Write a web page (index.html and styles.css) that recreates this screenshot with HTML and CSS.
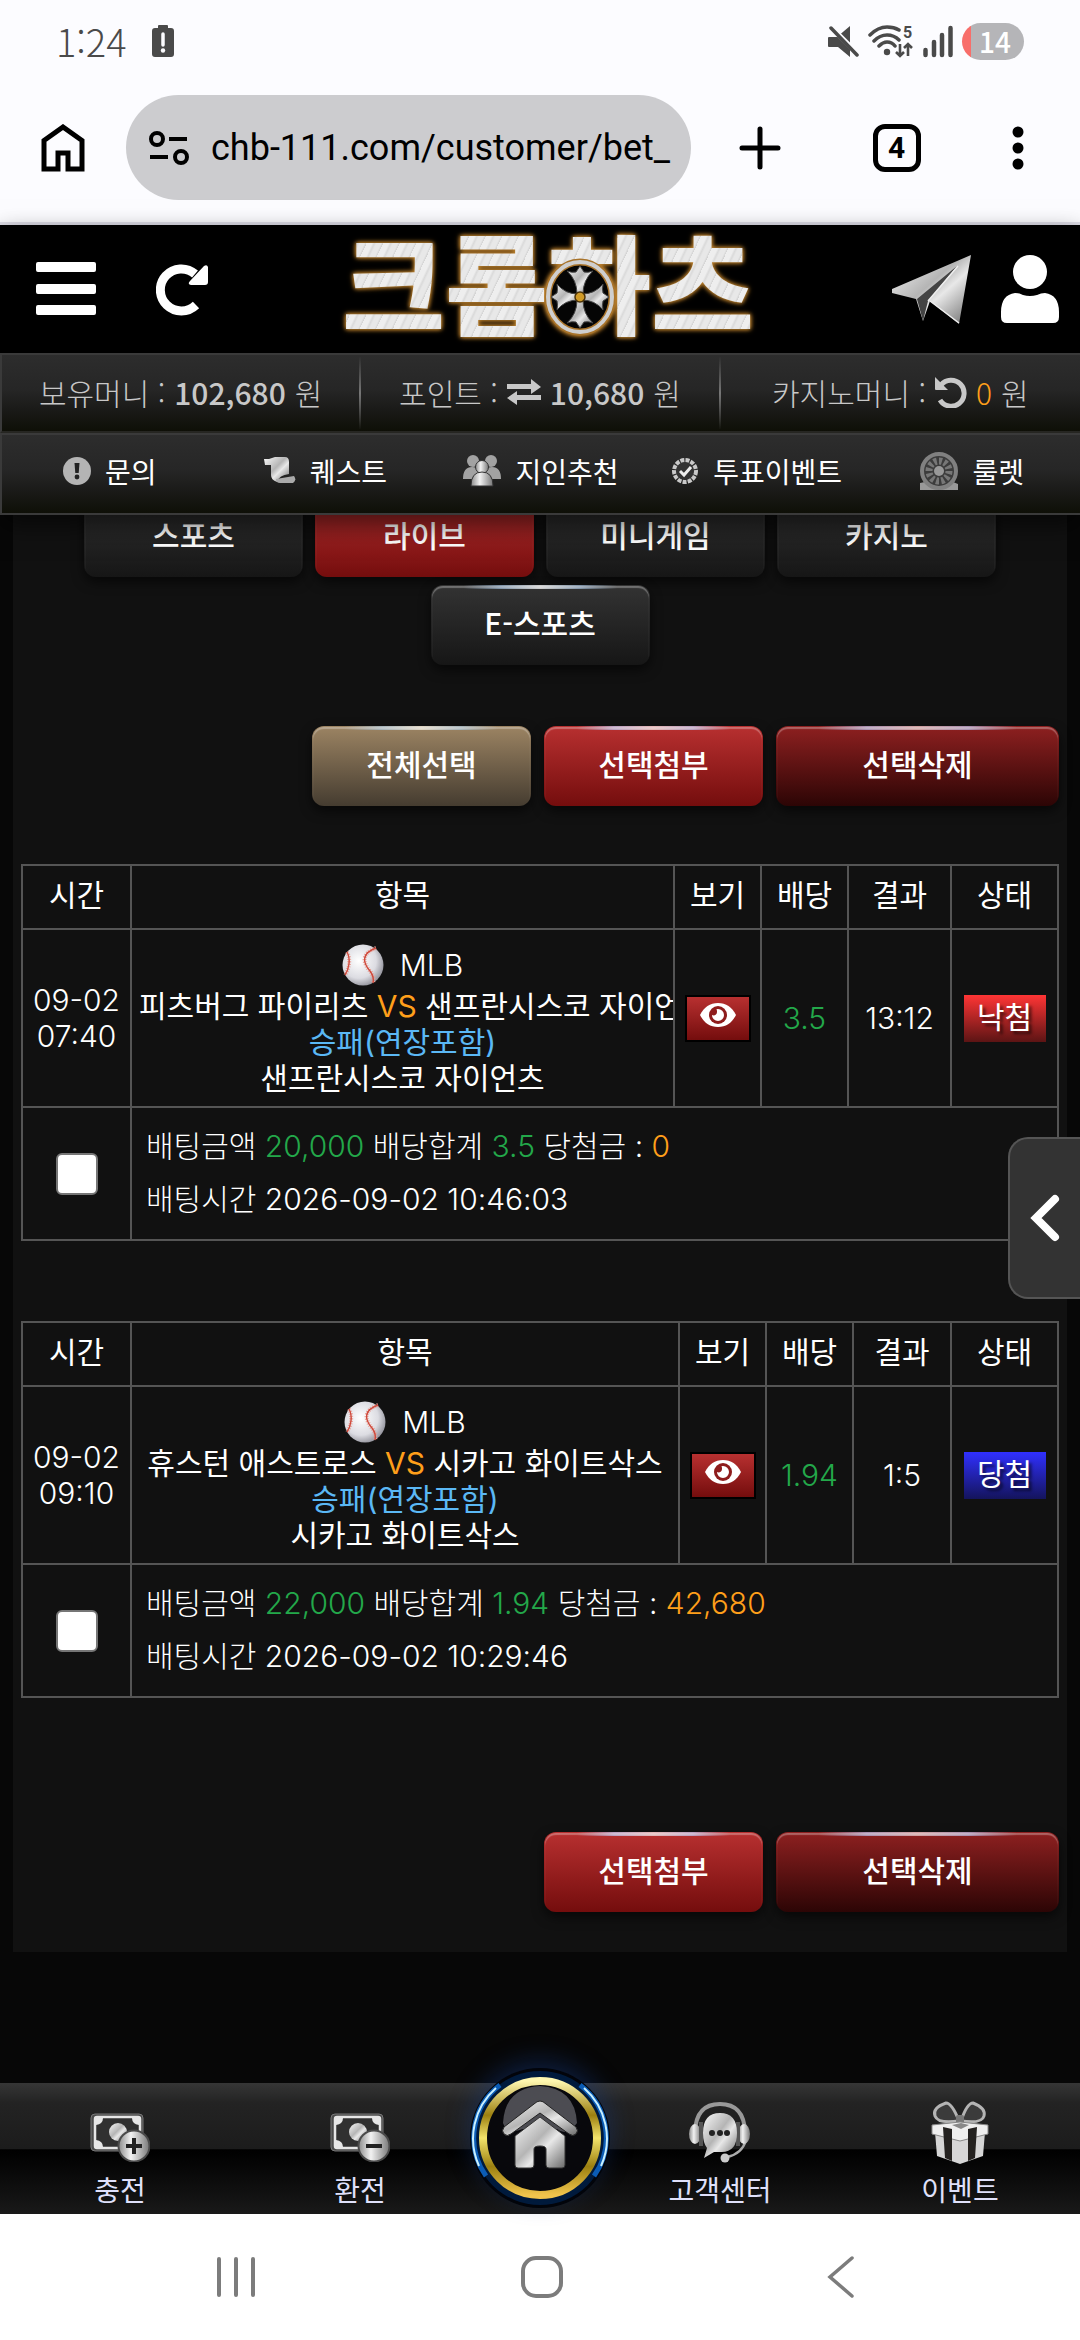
FILE: index.html
```html
<!DOCTYPE html>
<html lang="ko">
<head>
    <meta charset="UTF-8">
    <meta name="viewport" content="width=device-width, initial-scale=1.0">
    <title>크롬하츠</title>
    <link rel="stylesheet" href="styles.css">
</head>
<body>
    <!-- 공용 아이콘 -->
    <svg class="defs" width="0" height="0" aria-hidden="true">
        <defs>
            <linearGradient id="silver" x1="0" y1="0" x2="1" y2="1">
                <stop offset="0" stop-color="#fafafa"/><stop offset=".45" stop-color="#b5b5b5"/><stop offset=".6" stop-color="#e8e8e8"/><stop offset="1" stop-color="#6a6a6a"/>
            </linearGradient>
            <linearGradient id="grey" x1="0" y1="0" x2="1" y2="0">
                <stop offset="0" stop-color="#8a8a8a"/><stop offset=".4" stop-color="#f2f2f2"/><stop offset="1" stop-color="#777"/>
            </linearGradient>
            <linearGradient id="gold" x1="0" y1="0" x2="0" y2="1">
                <stop offset="0" stop-color="#fff8b0"/><stop offset=".3" stop-color="#9c8010"/><stop offset=".5" stop-color="#f3e36b"/><stop offset=".75" stop-color="#9c8010"/><stop offset="1" stop-color="#f0c44c"/>
            </linearGradient>
            <radialGradient id="ballShade" cx=".4" cy=".4" r=".65">
                <stop offset="0" stop-color="#fff"/><stop offset=".65" stop-color="#dcdce2"/><stop offset="1" stop-color="#8f8f98"/>
            </radialGradient>
        </defs>
        <symbol id="baseball" viewBox="0 0 42 42">
            <circle cx="21" cy="21" r="20.5" fill="url(#ballShade)"/>
            <path d="M5 8c4 7 2 17-2 23M34 4c-14 5-14 14-6 23 3 4 4 8 3 12" fill="none" stroke="#e8a097" stroke-width="4" stroke-dasharray="1 1.4"/>
            <path d="M5 8c4 7 2 17-2 23M34 4c-14 5-14 14-6 23 3 4 4 8 3 12" fill="none" stroke="#cf4a3c" stroke-width="1.4"/>
        </symbol>
        <symbol id="eye" viewBox="0 0 36 24">
            <path d="M0 12C4 4 10 0 18 0s14 4 18 12c-4 8-10 12-18 12S4 20 0 12z" fill="#fff"/>
            <circle cx="18" cy="12" r="9" fill="#8e1c1c"/>
            <path d="M18 6a6 6 0 1 1-6 6c2 1 5 0 5-3 0-1 0-2-.6-2.800Q17 6 18 6z" fill="#fff"/>
        </symbol>
        <symbol id="money" viewBox="0 0 60 50">
            <rect x="1" y="2" width="52" height="37" rx="4" fill="#4a4a4a" stroke="#777"/>
            <rect x="5" y="5" width="45" height="31" rx="2" fill="#303030" stroke="#e6e6e6" stroke-width="2.500"/>
            <path d="M6 6h7q0 6-7 7zM49 6h-7q0 6 7 7zM6 35h7q0-6-7-7z" fill="#e6e6e6"/>
            <circle cx="28" cy="20" r="9" fill="url(#silver)"/>
            <circle cx="44" cy="34" r="15.500" fill="url(#grey)" stroke="#4a4a4a" stroke-width="2"/>
        </symbol>
    </svg>

    <div class="status-bar">
        <div class="status-left">
            <span class="clock">1:24</span>
            <svg width="24" height="34" viewBox="0 0 24 34"><path d="M8 1h8q1 0 1 1v2h3q3 0 3 3v23q0 3-3 3H4q-3 0-3-3V7q0-3 3-3h3V2q0-1 1-1z" fill="#4a4a4a"/><path d="M12 10v11" stroke="#fcfcff" stroke-width="3.500" stroke-linecap="round"/><circle cx="12" cy="26.500" r="2.200" fill="#fcfcff"/></svg>
        </div>
        <div class="status-right">
            <svg width="32" height="34" viewBox="0 0 32 34"><path d="M2 13h8l13-11v31L11 23H2q-1 0-1-1v-8q0-1 1-1z" fill="#4a4a4a"/><path d="M1 0l31 31" stroke="#fcfcff" stroke-width="5"/><path d="M4 4l26 27" stroke="#4a4a4a" stroke-width="3.500" stroke-linecap="round"/></svg>
            <svg width="46" height="34" viewBox="0 0 46 34">
                <path d="M2 11q8-8 17-8 7 0 12 3M6 17q6-6 13-6 7 0 12 5M11 22q4-4 8-4 5 0 8 4" fill="none" stroke="#4a4a4a" stroke-width="3.500" stroke-linecap="round"/><circle cx="19" cy="28" r="3.200" fill="#4a4a4a"/>
                <path d="M32 20v12M28 28l4 4 4-4M40 32V20M36 24l4-4 4 4" fill="none" stroke="#4a4a4a" stroke-width="2.600"/>
                <text class="wifi-num" x="35" y="14">5</text>
            </svg>
            <svg width="30" height="34" viewBox="0 0 30 34"><path d="M2.500 26v5M11 18v13M19 11v20M27.500 4v27" stroke="#4a4a4a" stroke-width="4.500" stroke-linecap="round"/></svg>
            <span class="battery">14</span>
        </div>
    </div>

    <div class="browser-bar">
        <button class="plain" aria-label="홈"><svg width="44" height="48" viewBox="0 0 44 48"><path d="M3 16.500L22 3l19 13.500V45H27V29H17v16H3z" fill="none" stroke="#000" stroke-width="5"/></svg></button>
        <label class="url-box">
            <svg width="40" height="34" viewBox="0 0 40 34"><g fill="none" stroke="#000" stroke-width="4"><circle cx="8" cy="8" r="6"/><path d="M20 8h18M1 26h18"/><circle cx="32" cy="26" r="6"/></g></svg>
            <input type="text" value="chb-111.com/customer/bet_" aria-label="주소">
        </label>
        <div class="browser-actions">
            <button class="plain" aria-label="새 탭"><svg width="42" height="44" viewBox="0 0 42 44"><path d="M21 3v38M3 22h36" stroke="#000" stroke-width="5" stroke-linecap="round"/></svg></button>
            <button class="tab-count">4</button>
            <button class="plain" aria-label="메뉴"><svg width="12" height="44" viewBox="0 0 12 44"><circle cx="6" cy="6" r="5.500"/><circle cx="6" cy="22" r="5.500"/><circle cx="6" cy="38" r="5.500"/></svg></button>
        </div>
    </div>

    <header class="header">
        <div class="top">
            <div class="top-left">
                <button class="plain" aria-label="전체메뉴"><svg width="60" height="54" viewBox="0 0 60 54"><path d="M0 2q0-2 2-2h56q2 0 2 2v6q0 2-2 2H2q-2 0-2-2zM0 24q0-2 2-2h56q2 0 2 2v6q0 2-2 2H2q-2 0-2-2zM0 45q0-2 2-2h56q2 0 2 2v6q0 2-2 2H2q-2 0-2-2z" fill="#fff"/></svg></button>
                <button class="plain" aria-label="새로고침"><svg width="54" height="54" viewBox="0 0 54 54"><path d="M40 43A21 21 0 1 1 39 12" fill="none" stroke="#fff" stroke-width="9"/><path d="M52 5v15q0 3-3 3H35q-4-1-1-4L48 4q3-2 4 1z" fill="#fff"/></svg></button>
            </div>
            <h1 class="logo">
                <a href="#">크롬하츠</a>
                <svg class="logo-cross" width="72" height="78" viewBox="0 0 72 78">
                    <ellipse cx="36" cy="39" rx="32" ry="35" fill="#050505" stroke="#a8732a" stroke-width="7"/>
                    <ellipse cx="36" cy="39" rx="32" ry="35" fill="none" stroke="#cfcfcf" stroke-width="4"/>
                    <g fill="url(#silver)" stroke="#444" stroke-width="1">
                        <path d="M33 36q0-14-10-23 5 2 9 1l4-6 4 6q4 1 9-1-10 9-10 23z"/>
                        <path d="M33 42q0 14-10 23 5-2 9-1l4 6 4-6q4-1 9 1-10-9-10-23z"/>
                        <path d="M34 36q-13 0-21-10 1 5 0 9l-6 4 6 4q1 4 0 9 8-10 21-10z"/>
                        <path d="M38 36q13 0 21-10-1 5 0 9l6 4-6 4q-1 4 0 9-8-10-21-10z"/>
                    </g>
                    <circle cx="36" cy="39" r="5" fill="#d09a26" stroke="#4a3208" stroke-width="1.500"/>
                </svg>
            </h1>
            <div class="top-right">
                <a href="#" aria-label="텔레그램"><svg width="80" height="70" viewBox="0 0 80 70"><path d="M0 35L79 1 67 70 38 47l-7 20-7-22L0 39z" fill="url(#silver)"/><path d="M25 45L65 12 36 47l-5 20z" fill="#444"/><path d="M36 47L66 12M38 47l29 22" stroke="#eee" stroke-width="1.500"/></svg></a>
                <a href="#" aria-label="내정보"><svg width="60" height="68" viewBox="0 0 60 68"><circle cx="30" cy="17" r="17" fill="#fff"/><path d="M15 38q4 0 8 2 7 2 14 0 4-2 8-2 14 2 14 19v5q0 6-6 6H7q-6 0-6-6v-5q0-17 14-19z" fill="#fff"/></svg></a>
            </div>
        </div>

        <div class="bar money-bar">
            <div class="money"><span>보유머니 :</span> <b>102,680</b> <span>원</span></div>
            <div class="money"><span>포인트 :</span>
                <svg width="34" height="26" viewBox="0 0 34 26"><path d="M0 5h24V0l10 8-10 7v-5H0zM34 16H10v-4L0 19l10 7v-5h24z" fill="#c8c8c8"/></svg>
                <b>10,680</b> <span>원</span></div>
            <div class="money"><span>카지노머니 :</span>
                <svg width="32" height="32" viewBox="0 0 32 32"><path d="M6 9a13 13 0 1 1-1 15" fill="none" stroke="#c8c8c8" stroke-width="5"/><path d="M0 1v12q0 1 1 1h12z" fill="#c8c8c8"/></svg>
                <span class="orange">0</span> <span>원</span></div>
        </div>

        <nav class="bar quick-bar">
            <a href="#"><svg width="28" height="28" viewBox="0 0 28 28"><circle cx="14" cy="14" r="14" fill="#b4b4b4"/><path d="M11.500 6h5l-.8 10h-3.400z" fill="#222"/><circle cx="14" cy="20" r="2.400" fill="#222"/></svg>문의</a>
            <a href="#"><svg width="32" height="28" viewBox="0 0 32 28"><path d="M0 2h5l6-2h10q4 0 4 5v12q-10 1-12 8-6-2-6-7V8H1z" fill="url(#silver)"/><path d="M12 22l18-3q3 4-1 7H16q-4 0-4-4z" fill="#aaa"/></svg>퀘스트</a>
            <a href="#"><svg width="38" height="32" viewBox="0 0 38 32"><g fill="#a2a2a2"><circle cx="10" cy="6" r="6"/><circle cx="28" cy="6" r="6"/><path d="M0 24q0-12 9-12t9 12zM20 24q0-12 9-12t9 12z"/></g><g fill="url(#grey)" stroke="#333"><circle cx="19" cy="12" r="6.500"/><path d="M8 31q0-14 11-14t11 14z"/></g></svg>지인추천</a>
            <a href="#"><svg width="28" height="28" viewBox="0 0 28 28"><circle cx="14" cy="14" r="11" fill="#333" stroke="#c9c9c9" stroke-width="4" stroke-dasharray="4 1.200"/><path d="M9 14l4 4 7-8" fill="none" stroke="#eee" stroke-width="3"/></svg>투표이벤트</a>
            <a href="#"><svg width="38" height="38" viewBox="0 0 38 38"><path d="M0 38v-7l5-1h28l5 2v6z" fill="#999"/><circle cx="19" cy="19" r="17" fill="#3c3c3c" stroke="#808080" stroke-width="4"/><circle cx="19" cy="19" r="10" fill="none" stroke="#777" stroke-width="7" stroke-dasharray="3 2.200"/><circle cx="19" cy="19" r="5" fill="#999"/></svg>룰렛</a>
        </nav>
    </header>

    <main class="content">
        <section class="panel">
            <div class="tabs">
                <button class="btn dark">스포츠</button>
                <button class="btn red">라이브</button>
                <button class="btn dark">미니게임</button>
                <button class="btn dark">카지노</button>
                <button class="btn dark">E-스포츠</button>
            </div>

            <div class="actions">
                <button class="btn brown">전체선택</button>
                <button class="btn red">선택첨부</button>
                <button class="btn wine">선택삭제</button>
            </div>

            <table class="bet-table">
                <colgroup><col class="c-time"><col><col class="c-view"><col class="c-odds"><col class="c-result"><col class="c-state"></colgroup>
                <thead>
                    <tr><th>시간</th><th>항목</th><th>보기</th><th>배당</th><th>결과</th><th>상태</th></tr>
                </thead>
                <tbody>
                    <tr class="game">
                        <td>09-02<br>07:40</td>
                        <td class="item">
                            <div class="league"><svg width="42" height="42"><use href="#baseball"/></svg>MLB</div>
                            <div>피츠버그 파이리츠 <span class="orange">VS</span> 샌프란시스코 자이언츠</div>
                            <div class="blue">승패(연장포함)</div>
                            <div>샌프란시스코 자이언츠</div>
                        </td>
                        <td><button class="view" aria-label="보기"><svg width="36" height="24"><use href="#eye"/></svg></button></td>
                        <td class="green">3.5</td>
                        <td>13:12</td>
                        <td><span class="badge lose">낙첨</span></td>
                    </tr>
                    <tr>
                        <td><input type="checkbox" class="check" aria-label="2026-09-02 10:46:03 배팅 선택"></td>
                        <td class="info" colspan="5">
                            <div>배팅금액 <span class="green">20,000</span> 배당합계 <span class="green">3.5</span> 당첨금 : <span class="orange">0</span></div>
                            <div>배팅시간 2026-09-02 10:46:03</div>
                        </td>
                    </tr>
                </tbody>
            </table>

            <table class="bet-table">
                <colgroup><col class="c-time"><col><col class="c-view"><col class="c-odds"><col class="c-result short"><col class="c-state"></colgroup>
                <thead>
                    <tr><th>시간</th><th>항목</th><th>보기</th><th>배당</th><th>결과</th><th>상태</th></tr>
                </thead>
                <tbody>
                    <tr class="game">
                        <td>09-02<br>09:10</td>
                        <td class="item">
                            <div class="league"><svg width="42" height="42"><use href="#baseball"/></svg>MLB</div>
                            <div>휴스턴 애스트로스 <span class="orange">VS</span> 시카고 화이트삭스</div>
                            <div class="blue">승패(연장포함)</div>
                            <div>시카고 화이트삭스</div>
                        </td>
                        <td><button class="view" aria-label="보기"><svg width="36" height="24"><use href="#eye"/></svg></button></td>
                        <td class="green">1.94</td>
                        <td>1:5</td>
                        <td><span class="badge win">당첨</span></td>
                    </tr>
                    <tr>
                        <td><input type="checkbox" class="check" aria-label="2026-09-02 10:29:46 배팅 선택"></td>
                        <td class="info" colspan="5">
                            <div>배팅금액 <span class="green">22,000</span> 배당합계 <span class="green">1.94</span> 당첨금 : <span class="orange">42,680</span></div>
                            <div>배팅시간 2026-09-02 10:29:46</div>
                        </td>
                    </tr>
                </tbody>
            </table>

            <div class="actions bottom">
                <button class="btn red">선택첨부</button>
                <button class="btn wine">선택삭제</button>
            </div>
        </section>
    </main>

    <button class="side-open" aria-label="배팅카트 열기"><svg width="30" height="48" viewBox="0 0 30 48"><path d="M25 5L6 24l19 19" fill="none" stroke="#fff" stroke-width="8" stroke-linecap="round"/></svg></button>

    <nav class="foot-menu">
        <a href="#"><svg width="60" height="64" viewBox="0 0 60 64"><use href="#money" y="12" width="60" height="50"/><path d="M36 46h16M44 38v16" stroke="#222" stroke-width="4"/></svg>충전</a>
        <a href="#"><svg width="60" height="64" viewBox="0 0 60 64"><use href="#money" y="12" width="60" height="50"/><path d="M36 46h16" stroke="#222" stroke-width="4"/></svg>환전</a>
        <a href="#" class="home" aria-label="메인">
            <svg width="140" height="140" viewBox="0 0 140 140">
                <circle cx="70" cy="70" r="67" fill="#001a3c"/>
                <path d="M30 17A66 66 0 0 0 16 108M110 17A66 66 0 0 1 124 108" fill="none" stroke="#0b5cb5" stroke-width="5"/>
                <path d="M26 20A67 67 0 0 0 9 98M114 20A67 67 0 0 1 131 98" fill="none" stroke="#c8f0ff" stroke-width="2"/>
                <circle cx="70" cy="70" r="57" fill="#08080c" stroke="url(#gold)" stroke-width="8"/>
                <path d="M33 55q2-35 37-37 35 2 37 37-10 14-20 6H53q-16 6-20-6z" fill="#4c4c52"/>
                <path d="M70 33q3 0 6 3l30 23q3 4 0 7t-7 0L70 45 41 66q-4 3-7 0t0-7l30-23q3-3 6-3z" fill="url(#silver)" stroke="#222"/>
                <path d="M70 49l25 19v29q0 3-3 3H79q-3 0-3-3V81q0-3-6-3t-6 3v16q0 3-3 3H48q-3 0-3-3V68z" fill="url(#silver)" stroke="#333"/>
            </svg>
        </a>
        <a href="#"><svg width="62" height="64" viewBox="0 0 62 64">
            <path d="M6 32Q7 4 31 4t25 28" fill="none" stroke="#999" stroke-width="4"/>
            <path d="M57 40q-4 14-19 17" fill="none" stroke="#aaa" stroke-width="2.500"/>
            <ellipse cx="6" cy="34" rx="6" ry="10" fill="url(#grey)"/><ellipse cx="55" cy="34" rx="6" ry="10" fill="url(#grey)"/>
            <rect x="10" y="22" width="4" height="24" fill="#555"/><rect x="47" y="22" width="4" height="24" fill="#555"/>
            <path d="M31 13q17 0 17 20T31 52h-6l-10 6 3-10q-4-5-4-15 0-20 17-20z" fill="url(#silver)"/>
            <circle cx="23" cy="33" r="3" fill="#222"/><circle cx="31" cy="33" r="3" fill="#222"/><circle cx="38" cy="33" r="3" fill="#222"/>
            <circle cx="36" cy="58" r="4.500" fill="#ccc"/>
        </svg>고객센터</a>
        <a href="#"><svg width="60" height="64" viewBox="0 0 60 64">
            <path d="M29 21Q8 24 5 16T16 3q6 0 13 18zM31 21q21 3 23-5T43 3q-6 0-12 18z" fill="#3b3b3b" stroke="#b4b4b4" stroke-width="3"/>
            <rect x="26" y="15" width="8" height="9" rx="2" fill="#777"/>
            <path d="M5 32l25 8v24L7 56zM55 32l-25 8v24l23-8z" fill="#d6d6d6"/>
            <path d="M2 25l28-3 28 3v9l-28 7-28-7z" fill="#efefef" stroke="#888"/>
            <path d="M13 27l9 2v32l-7-3zM47 27l-9 2v32l7-3z" fill="#242220"/>
            <path d="M22 25l9-2 8 2-8 4z" fill="#888"/>
        </svg>이벤트</a>
    </nav>

    <nav class="system-nav">
        <button class="plain" aria-label="최근 앱"><svg width="40" height="42" viewBox="0 0 40 42"><path d="M3 3v36M20 3v36M37 3v36" stroke="#7c7c7c" stroke-width="4" stroke-linecap="round"/></svg></button>
        <button class="plain" aria-label="홈 화면"><svg width="42" height="42" viewBox="0 0 42 42"><rect x="2" y="2" width="38" height="38" rx="13" fill="none" stroke="#7c7c7c" stroke-width="4"/></svg></button>
        <button class="plain" aria-label="뒤로"><svg width="28" height="42" viewBox="0 0 28 42"><path d="M25 2L3 21l22 19" fill="none" stroke="#7c7c7c" stroke-width="3.500" stroke-linecap="round"/></svg></button>
    </nav>
</body>
</html>
```

FILE: styles.css
```css
* {
    box-sizing: border-box;
    margin: 0;
    padding: 0;
}

body {
    display: flex;
    flex-direction: column;
    position: relative;
    min-height: 100vh;
    background: #070707;
    color: #fff;
    font-family: "Noto Sans CJK KR", sans-serif;
    font-size: 30px;
    font-weight: 300;
    line-height: 36px;
    overflow-x: hidden;
}

a {
    color: inherit;
    text-decoration: none;
}

button,
input {
    font: inherit;
    color: inherit;
    border: 0;
}

svg {
    display: block;
    flex: none;
}

.defs {
    position: absolute;
}

.plain {
    background: none;
}

.orange { color: #ff9f1a; }
.green { color: #23a84a; }
.blue { color: #5bb8f5; }

/* 상태바 */
.status-bar {
    display: flex;
    justify-content: space-between;
    align-items: center;
    height: 82px;
    padding: 0 56px;
    background: #fcfcff;
    color: #4a4a4a;
}

.status-left {
    display: flex;
    align-items: center;
    gap: 24px;
}

.clock {
    font-size: 38px;
}

.status-right {
    display: flex;
    align-items: center;
    gap: 9px;
}

.wifi-num {
    font-family: Roboto, sans-serif;
    font-size: 16px;
    font-weight: 700;
    fill: #4a4a4a;
}

.battery {
    width: 62px;
    height: 37px;
    border-radius: 19px;
    background: linear-gradient(90deg, #f86e6a 15%, #b5b5b8 15%);
    color: #fff;
    font-size: 28px;
    font-weight: 500;
    text-align: center;
    text-indent: 4px;
}

/* 브라우저 주소창 */
.browser-bar {
    display: flex;
    align-items: center;
    height: 143px;
    padding: 0 56px 9px 41px;
    background: #fcfcff;
    border-bottom: 3px solid #e0dfe9;
    color: #000;
}

.url-box {
    display: flex;
    align-items: center;
    gap: 22px;
    flex: 1;
    min-width: 0;
    height: 105px;
    margin: 0 48px 0 41px;
    padding: 0 16px 0 23px;
    border-radius: 53px;
    background: #cccccf;
}

.url-box input {
    flex: 1;
    min-width: 0;
    background: none;
    font-family: Roboto, sans-serif;
    font-size: 36px;
    font-weight: 400;
    line-height: 48px;
}

.browser-actions {
    display: flex;
    align-items: center;
    justify-content: space-between;
    flex: 0 0 285px;
}

.tab-count {
    width: 48px;
    height: 48px;
    border: 5px solid #000;
    border-radius: 12px;
    background: none;
    font-family: Roboto, sans-serif;
    font-size: 30px;
    font-weight: 700;
}

/* 헤더 */
.header {
    position: relative;
    z-index: 2;
    box-shadow: 0 10px 24px rgba(0, 0, 0, 0.6);
}

.top {
    display: grid;
    grid-template-columns: 1fr auto 1fr;
    align-items: center;
    height: 128px;
    padding: 0 20px 0 36px;
    background: #000;
}

.top-left,
.top-right {
    display: flex;
    align-items: center;
    gap: 60px;
}

.top-right {
    justify-content: flex-end;
    gap: 28px;
}

.logo {
    position: relative;
    padding-bottom: 16px;
    font-size: 112px;
    font-weight: 900;
    line-height: 112px;
    filter: drop-shadow(0 0 2px #c58a35) drop-shadow(0 0 2px #a56b1c);
}

.logo a {
    display: block;
    background: repeating-linear-gradient(115deg, #eee 0 5px, #dadada 7px, #e8e8e8 9px 13px, #d2d2d2 15px);
    background-clip: text;
    -webkit-background-clip: text;
    color: transparent;
}

.logo-cross {
    position: absolute;
    left: 49%;
    bottom: 17px;
}

.bar {
    display: grid;
    align-items: center;
    height: 80px;
    border: 2px solid #3a3a3a;
    border-right: 0;
    background: linear-gradient(#2d2d2d, #262626 45%, #1b1b19 70%, #0e0f07);
}

.money-bar {
    grid-template-columns: repeat(3, 1fr);
    border-bottom-color: #262622;
    color: #c8c8c8;
}

.money {
    display: flex;
    align-items: center;
    justify-content: center;
    gap: 9px;
    height: 72px;
    padding-bottom: 2px;
    border-right: 2px solid;
    border-image: linear-gradient(transparent, #777, transparent) 1;
}

.money:last-child {
    border-right: 0;
}

.money b {
    font-weight: 500;
}

.quick-bar {
    grid-template-columns: repeat(5, 1fr);
    height: 82px;
    padding-bottom: 6px;
    font-size: 28px;
    font-weight: 400;
}

.quick-bar a {
    display: flex;
    align-items: center;
    justify-content: center;
    gap: 14px;
}

/* 본문 */
.content {
    flex: 1;
    padding: 0 13px;
}

.panel {
    padding: 0 8px 40px;
    background: #111;
}

.btn {
    width: 219px;
    height: 80px;
    padding-bottom: 6px;
    border: 1px solid transparent;
    border-radius: 12px;
    box-shadow: inset 0 2px 1px rgba(255, 255, 255, 0.3), 0 5px 12px rgba(0, 0, 0, 0.6);
    font-weight: 500;
}

.dark {
    background: linear-gradient(90deg, transparent 15%, #7f93a8 32%, #ccc 50%, #7f93a8 68%, transparent 85%) top / 100% 4px no-repeat border-box, linear-gradient(#333, #161616) border-box;
}

.red {
    background: linear-gradient(90deg, transparent 15%, #b9a0c0 32%, #e3b6b6 50%, #b9a0c0 68%, transparent 85%) top / 100% 4px no-repeat border-box, linear-gradient(#b83030, #740d0d) border-box;
}

.brown {
    background: linear-gradient(90deg, transparent 15%, #a5b2b8 32%, #ddd3c2 50%, #a5b2b8 68%, transparent 85%) top / 100% 4px no-repeat border-box, linear-gradient(#9c8463, #453c30) border-box;
}

.wine {
    width: 283px;
    background: linear-gradient(90deg, transparent 15%, #a890b0 32%, #d0a0a0 50%, #a890b0 68%, transparent 85%) top / 100% 4px no-repeat border-box, linear-gradient(#8e2020, #2c0505) border-box;
}

/* 스크롤되어 첫 줄이 헤더 밑으로 들어감 */
.tabs {
    display: flex;
    flex-wrap: wrap;
    justify-content: center;
    gap: 8px 12px;
    margin: -18px auto 61px;
    padding: 0 60px;
}

.actions {
    display: flex;
    justify-content: flex-end;
    gap: 13px;
    margin-bottom: 58px;
}

.actions.bottom {
    margin: 134px 0 0;
}

.bet-table {
    width: 100%;
    border-collapse: collapse;
    table-layout: fixed;
    font-family: Inter, "Noto Sans CJK KR", sans-serif;
    text-align: center;
}

.bet-table + .bet-table {
    margin-top: 80px;
}

.c-time { width: 109px; }
.c-view { width: 87px; }
.c-odds { width: 87px; }
.c-result { width: 103px; }
.c-result.short { width: 98px; }
.c-state { width: 107px; }

.bet-table th,
.bet-table td {
    border: 2px solid #555;
}

.bet-table th {
    height: 64px;
    padding-bottom: 4px;
    font-weight: 400;
}

.bet-table .item {
    padding: 12px 7px 10px;
    overflow: hidden;
    font-weight: 400;
    white-space: nowrap;
}

.league {
    display: flex;
    align-items: center;
    justify-content: center;
    gap: 16px;
    height: 46px;
    font-weight: 300;
}

.view {
    display: inline-flex;
    justify-content: center;
    width: 66px;
    height: 47px;
    padding-top: 6px;
    border: 2px solid #000;
    background: linear-gradient(#b83030, #740d0d);
    vertical-align: middle;
}

.badge {
    display: inline-block;
    width: 82px;
    height: 47px;
    line-height: 45px;
    font-weight: 400;
    text-shadow: 3px 3px 3px rgba(0, 0, 0, 0.6);
    vertical-align: middle;
}

.lose { background: linear-gradient(#ff3535, #5c1414); }
.win { background: linear-gradient(#3030ff, #14145c); }

.check {
    display: block;
    width: 42px;
    height: 42px;
    margin: 0 auto;
    appearance: none;
    border: 2px solid #767676;
    border-radius: 6px;
    background: #fff;
}

.check:checked {
    background: #1a73e8;
}

.bet-table .info {
    padding: 12px 14px 13px;
    line-height: 53px;
    text-align: left;
}

/* 오른쪽 배팅카트 버튼 */
.side-open {
    position: absolute;
    right: 0;
    top: 1137px;
    display: flex;
    align-items: center;
    justify-content: center;
    width: 72px;
    height: 162px;
    border: 2px solid #555;
    border-right: 0;
    border-radius: 20px 0 0 20px;
    background: #333;
}

/* 하단 메뉴 */
.foot-menu {
    position: relative;
    display: grid;
    grid-template-columns: 2fr 2fr 1fr 2fr 2fr;
    height: 131px;
    padding-top: 17px;
    background: linear-gradient(#363636, #232323 15%, #1c1c1c 50%, #000 51%, #191919);
    color: #dfe0fa;
    font-size: 28px;
    font-weight: 400;
}

.foot-menu a {
    display: flex;
    flex-direction: column;
    align-items: center;
    gap: 7px;
}

.foot-menu .home {
    position: absolute;
    left: 50%;
    bottom: 6px;
    width: 140px;
    height: 140px;
    margin-left: -70px;
    border-radius: 50%;
    background: #02040a;
    box-shadow: 0 -8px 24px rgba(20, 60, 140, 0.4);
}

.foot-menu .home + a {
    grid-column: 4;
}

/* 시스템 내비게이션 */
.system-nav {
    display: flex;
    align-items: center;
    justify-content: space-between;
    height: 126px;
    padding: 0 225px 0 216px;
    background: #fff;
}
```
